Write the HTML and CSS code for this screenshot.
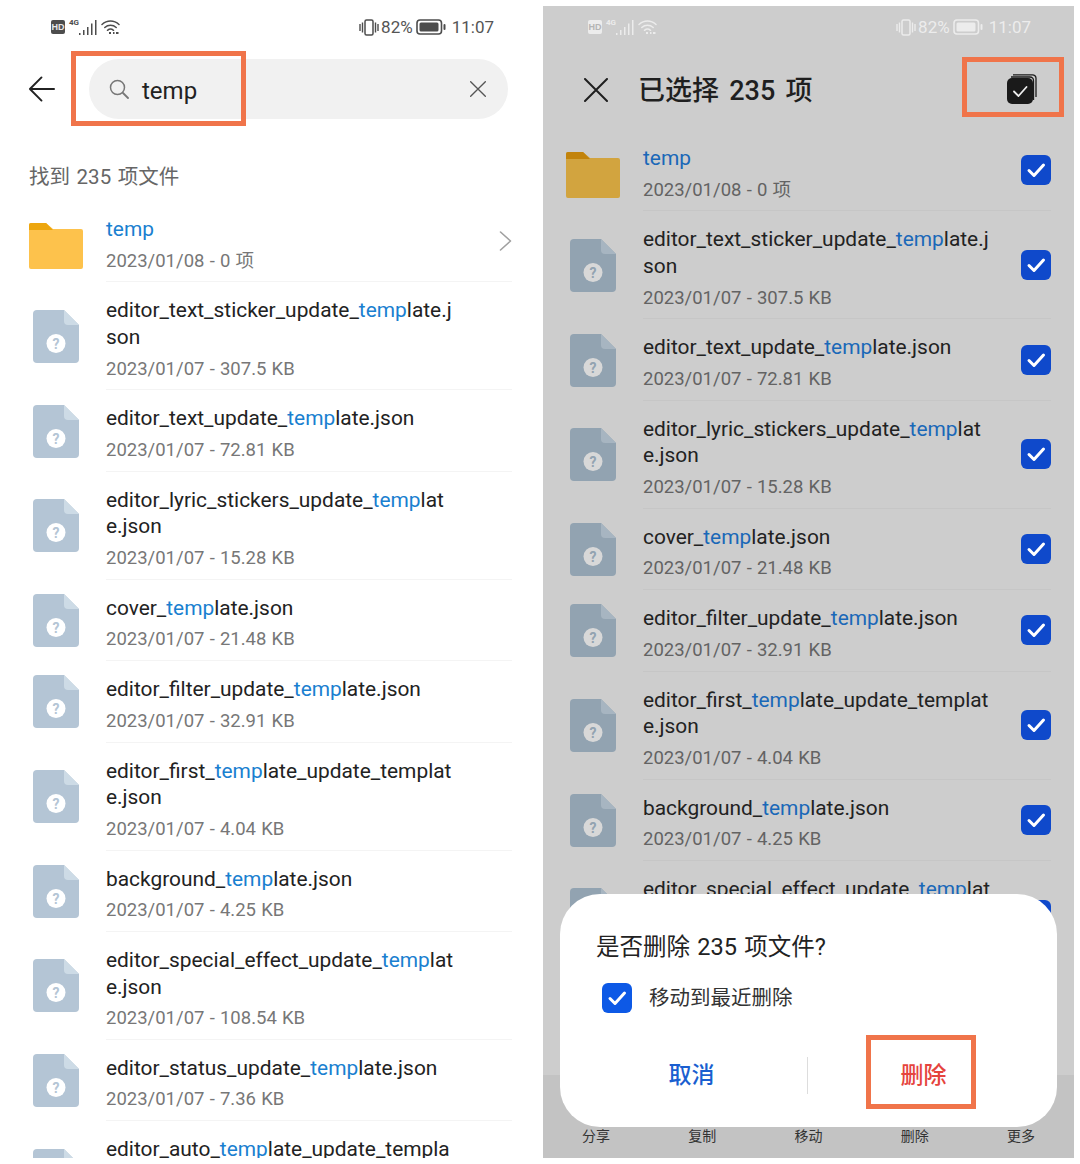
FILE: index.html
```html
<!DOCTYPE html>
<html lang="zh-CN">
<head>
<meta charset="utf-8">
<title>文件搜索</title>
<link rel="stylesheet" href="styles.css">
</head>
<body>
<svg class="defs" aria-hidden="true">
  <symbol id="file" viewBox="0 0 46 53">
    <path class="file-body" d="M4 0H31L46 15V49a4 4 0 0 1-4 4H4a4 4 0 0 1-4-4V4a4 4 0 0 1 4-4Z"/>
    <path class="file-fold" d="M31 0L46 15H35a4 4 0 0 1-4-4Z"/>
    <circle class="file-dot" cx="23" cy="33.500" r="9.500"/>
    <text class="file-q" x="23" y="38.500" text-anchor="middle">?</text>
  </symbol>
  <symbol id="folder" viewBox="0 0 54 46">
    <path class="folder-body" d="M2 0H17L24 6H52a2 2 0 0 1 2 2V44a2 2 0 0 1-2 2H2a2 2 0 0 1-2-2V2a2 2 0 0 1 2-2Z"/>
    <path class="folder-tab" d="M2 0H17L24 7H0V2a2 2 0 0 1 2-2Z"/>
  </symbol>
  <symbol id="tick" viewBox="0 0 30 30">
    <path d="M8 15.500L13 20.500L22.500 10" fill="none" stroke="#fff" stroke-width="3" stroke-linecap="round" stroke-linejoin="round"/>
  </symbol>
  <symbol id="close" viewBox="0 0 24 24">
    <path d="M1 1L23 23M23 1L1 23" fill="none" stroke="currentColor" stroke-width="2" stroke-linecap="round"/>
  </symbol>
  <symbol id="signal" viewBox="0 0 19 15">
    <path d="M1 13h1.500v2H1ZM5 10h1.500v5H5ZM9 7h1.500v8H9ZM13 3.500h1.500V15H13ZM17 0h1.500v15H17Z" fill="currentColor"/>
  </symbol>
  <symbol id="wifi" viewBox="0 0 19 16">
    <path d="M1 5.500C6 .8 13 .8 18 5.500M3.800 8.500C7 5.600 12 5.600 15.200 8.500M6.500 11.300C8.300 9.800 10.700 9.800 12.500 11.300" fill="none" stroke="currentColor" stroke-width="1.500" stroke-linecap="round"/>
    <path d="M8 13h2v2H8ZM12 13h1.500v2H12ZM15 13h2.500v2H15Z" fill="currentColor"/>
  </symbol>
  <symbol id="vibrate" viewBox="0 0 20 17">
    <rect x="6" y="1" width="8" height="15" rx="1.500" fill="none" stroke="currentColor" stroke-width="1.500"/>
    <path d="M1 5v7M3.500 3.500v10M16.500 3.500v10M19 5v7" fill="none" stroke="currentColor" stroke-width="1.400"/>
  </symbol>
  <symbol id="battery" viewBox="0 0 30 16">
    <rect x="1" y="1" width="24.500" height="14" rx="3" fill="none" stroke="currentColor" stroke-width="1.600"/>
    <rect x="3.500" y="3.500" width="19" height="9" rx="1.500" fill="currentColor"/>
    <rect x="27.500" y="5" width="2" height="6" rx="1" fill="currentColor"/>
  </symbol>
</svg>

<main class="phone phone-search">
  <div class="status">
    <div class="status-side">
      <span class="hd">HD</span>
      <span class="net"><span class="net-label">4G</span><svg class="ic-signal"><use href="#signal"/></svg></span>
      <svg class="ic-wifi"><use href="#wifi"/></svg>
    </div>
    <div class="status-side">
      <svg class="ic-vibrate"><use href="#vibrate"/></svg>
      <span class="status-text">82%</span>
      <svg class="ic-battery"><use href="#battery"/></svg>
      <span class="status-text clock">11:07</span>
    </div>
  </div>

  <div class="search-row">
    <svg class="back" viewBox="0 0 28 28"><path d="M27 14H2M14 2L2 14L14 26" fill="none" stroke="currentColor" stroke-width="2" stroke-linecap="round" stroke-linejoin="round"/></svg>
    <div class="search">
      <svg class="search-ic" viewBox="0 0 20 20"><circle cx="8.500" cy="8.500" r="7" fill="none" stroke="#777" stroke-width="1.500"/><path d="M14 14L19 19" stroke="#777" stroke-width="1.800" stroke-linecap="round"/></svg>
      <span class="search-text">temp</span>
      <svg class="search-clear"><use href="#close"/></svg>
    </div>
  </div>

  <div class="found">找到 235 项文件</div>

  <div class="list">
    <div class="row"><svg class="folder"><use href="#folder"/></svg><div class="body"><div class="text"><div class="name"><b>temp</b></div><div class="meta">2023/01/08 - 0 项</div></div><svg class="chev" viewBox="0 0 13 20"><path d="M1.500 1L11.500 10L1.500 19" fill="none" stroke="#a0a0a0" stroke-width="1.600" stroke-linecap="round" stroke-linejoin="round"/></svg></div></div>
    <div class="row"><svg class="file"><use href="#file"/></svg><div class="body"><div class="text"><div class="name">editor_text_sticker_update_<b>temp</b>late.j<br>son</div><div class="meta">2023/01/07 - 307.5 KB</div></div></div></div>
    <div class="row"><svg class="file"><use href="#file"/></svg><div class="body"><div class="text"><div class="name">editor_text_update_<b>temp</b>late.json</div><div class="meta">2023/01/07 - 72.81 KB</div></div></div></div>
    <div class="row"><svg class="file"><use href="#file"/></svg><div class="body"><div class="text"><div class="name">editor_lyric_stickers_update_<b>temp</b>lat<br>e.json</div><div class="meta">2023/01/07 - 15.28 KB</div></div></div></div>
    <div class="row"><svg class="file"><use href="#file"/></svg><div class="body"><div class="text"><div class="name">cover_<b>temp</b>late.json</div><div class="meta">2023/01/07 - 21.48 KB</div></div></div></div>
    <div class="row"><svg class="file"><use href="#file"/></svg><div class="body"><div class="text"><div class="name">editor_filter_update_<b>temp</b>late.json</div><div class="meta">2023/01/07 - 32.91 KB</div></div></div></div>
    <div class="row"><svg class="file"><use href="#file"/></svg><div class="body"><div class="text"><div class="name">editor_first_<b>temp</b>late_update_templat<br>e.json</div><div class="meta">2023/01/07 - 4.04 KB</div></div></div></div>
    <div class="row"><svg class="file"><use href="#file"/></svg><div class="body"><div class="text"><div class="name">background_<b>temp</b>late.json</div><div class="meta">2023/01/07 - 4.25 KB</div></div></div></div>
    <div class="row"><svg class="file"><use href="#file"/></svg><div class="body"><div class="text"><div class="name">editor_special_effect_update_<b>temp</b>lat<br>e.json</div><div class="meta">2023/01/07 - 108.54 KB</div></div></div></div>
    <div class="row"><svg class="file"><use href="#file"/></svg><div class="body"><div class="text"><div class="name">editor_status_update_<b>temp</b>late.json</div><div class="meta">2023/01/07 - 7.36 KB</div></div></div></div>
    <div class="row"><svg class="file"><use href="#file"/></svg><div class="body"><div class="text"><div class="name">editor_auto_<b>temp</b>late_update_templa<br>te.json</div><div class="meta">2023/01/07 - 5.12 KB</div></div></div></div>
  </div>
  <div class="mark mark-search"></div>
</main>

<section class="phone phone-select">
  <div class="status">
    <div class="status-side">
      <span class="hd">HD</span>
      <span class="net"><span class="net-label">4G</span><svg class="ic-signal"><use href="#signal"/></svg></span>
      <svg class="ic-wifi"><use href="#wifi"/></svg>
    </div>
    <div class="status-side">
      <svg class="ic-vibrate"><use href="#vibrate"/></svg>
      <span class="status-text">82%</span>
      <svg class="ic-battery"><use href="#battery"/></svg>
      <span class="status-text clock">11:07</span>
    </div>
  </div>

  <div class="select-head">
    <svg class="select-close"><use href="#close"/></svg>
    <h1 class="select-title">已选择 235 项</h1>
    <svg class="select-all" viewBox="0 0 30 30">
      <path d="M6 .8H25.500a3.500 3.500 0 0 1 3.500 3.500V23" fill="none" stroke="#1a1a1a" stroke-width="1.300"/>
      <path d="M4 3H23a3.500 3.500 0 0 1 3.500 3.500V26" fill="none" stroke="#1a1a1a" stroke-width="1.300"/>
      <rect x="0" y="4" width="26" height="26" rx="5" fill="#1a1a1a"/>
      <path d="M7 17.500L11.500 22L19.500 13" fill="none" stroke="#eee" stroke-width="1.800" stroke-linecap="round" stroke-linejoin="round"/>
    </svg>
  </div>

  <div class="list">
    <div class="row"><svg class="folder"><use href="#folder"/></svg><div class="body"><div class="text"><div class="name"><b>temp</b></div><div class="meta">2023/01/08 - 0 项</div></div><svg class="check"><use href="#tick"/></svg></div></div>
    <div class="row"><svg class="file"><use href="#file"/></svg><div class="body"><div class="text"><div class="name">editor_text_sticker_update_<b>temp</b>late.j<br>son</div><div class="meta">2023/01/07 - 307.5 KB</div></div><svg class="check"><use href="#tick"/></svg></div></div>
    <div class="row"><svg class="file"><use href="#file"/></svg><div class="body"><div class="text"><div class="name">editor_text_update_<b>temp</b>late.json</div><div class="meta">2023/01/07 - 72.81 KB</div></div><svg class="check"><use href="#tick"/></svg></div></div>
    <div class="row"><svg class="file"><use href="#file"/></svg><div class="body"><div class="text"><div class="name">editor_lyric_stickers_update_<b>temp</b>lat<br>e.json</div><div class="meta">2023/01/07 - 15.28 KB</div></div><svg class="check"><use href="#tick"/></svg></div></div>
    <div class="row"><svg class="file"><use href="#file"/></svg><div class="body"><div class="text"><div class="name">cover_<b>temp</b>late.json</div><div class="meta">2023/01/07 - 21.48 KB</div></div><svg class="check"><use href="#tick"/></svg></div></div>
    <div class="row"><svg class="file"><use href="#file"/></svg><div class="body"><div class="text"><div class="name">editor_filter_update_<b>temp</b>late.json</div><div class="meta">2023/01/07 - 32.91 KB</div></div><svg class="check"><use href="#tick"/></svg></div></div>
    <div class="row"><svg class="file"><use href="#file"/></svg><div class="body"><div class="text"><div class="name">editor_first_<b>temp</b>late_update_templat<br>e.json</div><div class="meta">2023/01/07 - 4.04 KB</div></div><svg class="check"><use href="#tick"/></svg></div></div>
    <div class="row"><svg class="file"><use href="#file"/></svg><div class="body"><div class="text"><div class="name">background_<b>temp</b>late.json</div><div class="meta">2023/01/07 - 4.25 KB</div></div><svg class="check"><use href="#tick"/></svg></div></div>
    <div class="row"><svg class="file"><use href="#file"/></svg><div class="body"><div class="text"><div class="name">editor_special_effect_update_<b>temp</b>lat<br>e.json</div><div class="meta">2023/01/07 - 108.54 KB</div></div><svg class="check"><use href="#tick"/></svg></div></div>
  </div>

  <div class="mark mark-all"></div>

  <nav class="toolbar">
    <span>分享</span><span>复制</span><span>移动</span><span>删除</span><span>更多</span>
  </nav>

  <div class="dialog">
    <div class="dialog-title">是否删除 235 项文件?</div>
    <div class="dialog-option">
      <svg class="check"><use href="#tick"/></svg>
      <span>移动到最近删除</span>
    </div>
    <div class="dialog-actions">
      <button class="action action-cancel">取消</button>
      <i class="action-sep"></i>
      <button class="action action-delete">删除</button>
    </div>
    <div class="mark mark-delete"></div>
  </div>
</section>
</body>
</html>
```
FILE: styles.css
```css
* { box-sizing: border-box; }

html, body {
  margin: 0;
  height: 1164px;
  overflow: hidden;
  background: #fff;
}

body {
  display: flex;
  align-items: flex-start;
  font-family: Roboto, "Noto Sans CJK SC", sans-serif;
  color: #222;
}

.defs { position: absolute; width: 0; height: 0; }

.phone {
  position: relative;
  height: 1158px;
  overflow: hidden;
  flex: none;
}

.phone-search {
  width: 543px;
  --file: #b4c5d5;
  --fold: #cddbe6;
  --dot: #fff;
  --folder: #fdc24c;
  --tab: #eda60f;
  --line: #f4f4f4;
  --hit: #1a7fd0;
  --meta: #777;
}

.phone-select {
  width: 531px;
  height: 1152px;
  margin-top: 6px;
  background: #cdcdcd;
  --file: #92a3b1;
  --fold: #a7b5c1;
  --dot: #d8d8d8;
  --folder: #d2a43f;
  --tab: #c2830c;
  --line: #c6c6c6;
  --hit: #1a68b8;
  --meta: #636363;
}

/* status bar */
.status {
  display: flex;
  justify-content: space-between;
  align-items: center;
  color: #4d4d4d;
}

.phone-search .status { height: 54px; padding: 0 49px 0 51px; }
.phone-select .status { height: 42px; padding: 0 43px 0 45px; color: #ececec; }

.status-side { display: flex; align-items: center; }

.hd {
  width: 14px;
  height: 14px;
  border-radius: 2px;
  background: #4d4d4d;
  color: #e8e8e8;
  font: 700 9px/14px "Liberation Sans", sans-serif;
  text-align: center;
}
.phone-select .hd { background: #ececec; color: #b5b5b5; }

.net { display: flex; align-items: flex-end; margin-left: 4px; position: relative; width: 28px; height: 16px; }
.net-label { font-size: 8px; line-height: 8px; font-weight: 700; position: absolute; left: 0; top: 0; }
.ic-signal { width: 19px; height: 15px; margin-left: 9px; }
.ic-wifi { width: 19px; height: 16px; margin-left: 4px; }
.ic-vibrate { width: 20px; height: 17px; margin-right: 2px; }
.ic-battery { width: 30px; height: 16px; margin: 0 6px 0 3px; }
.status-text { font-size: 17px; line-height: 20px; color: #555; }
.phone-select .status-text { color: #ececec; }

/* search header */
.search-row {
  display: flex;
  align-items: center;
  gap: 34px;
  margin-top: 5px;
  padding-left: 28px;
}

.back { width: 27px; height: 28px; color: #222; flex: none; }

.search {
  display: flex;
  align-items: center;
  width: 419px;
  height: 60px;
  padding: 0 22px 0 20px;
  border-radius: 30px;
  background: #f1f1f1;
}

.search-ic { width: 20px; height: 20px; flex: none; margin-top: -1px; }
.search-text { margin-left: 13px; padding-top: 3px; font-size: 24px; color: #222; flex: 1; }
.search-clear { width: 16px; height: 16px; color: #555; flex: none; }

.found {
  margin: 43px 0 9px 29px;
  font-size: 20.500px;
  word-spacing: 1.500px;
  line-height: 30px;
  color: #666;
}

/* list */
.row {
  display: flex;
  align-items: center;
  padding-left: 33px;
}

.phone-select .row { padding-left: 27px; }

.file { width: 46px; height: 53px; margin-right: 27px; flex: none; }

.folder {
  width: 54px;
  height: 46px;
  margin: 8px 23px 0 -4px;
  flex: none;
}

.file-body { fill: var(--file); }
.file-fold { fill: var(--fold); }
.file-dot { fill: var(--dot); }
.file-q { font: 700 14px Roboto, sans-serif; fill: var(--file); }
.folder-body { fill: var(--folder); }
.folder-tab { fill: var(--tab); }

.body {
  display: flex;
  align-items: center;
  flex: 1;
  min-width: 0;
  padding: 15px 0 7.800px;
  border-bottom: 1px solid var(--line);
  margin-right: 31px;
}

.phone-select .body { margin-right: 23px; }
.body .check, .body .chev { margin-top: -7px; }

.text { flex: 1; min-width: 0; }

.name {
  font-size: 20.900px;
  line-height: 26.600px;
  white-space: nowrap;
  color: #222;
}

.name b { font-weight: 400; color: var(--hit); }

.meta {
  margin-top: 5px;
  font-size: 18.500px;
  word-spacing: .6px;
  line-height: 26px;
  color: var(--meta);
  white-space: nowrap;
}

.chev { width: 13px; height: 20px; flex: none; margin-right: 0; }

.check {
  width: 30px;
  height: 30px;
  border-radius: 6px;
  background: #0f49cb;
  flex: none;
}

/* select header */
.select-head {
  display: flex;
  align-items: center;
  height: 82px;
  padding: 2px 37px 0 41px;
}

.select-close { width: 24px; height: 24px; color: #1f1f1f; flex: none; }

.select-title {
  margin: 2px 0 0 30px;
  flex: 1;
  font-size: 27px;
  word-spacing: 3.500px;
  line-height: 34px;
  font-weight: 500;
  color: #1f1f1f;
}

.select-all { width: 30px; height: 30px; flex: none; margin-top: -2px; }

/* toolbar */
.toolbar {
  position: absolute;
  left: 0;
  right: 0;
  bottom: 0;
  height: 83px;
  display: grid;
  grid-template-columns: repeat(5, 1fr);
  align-items: end;
  padding-bottom: 12px;
  background: #c3c3c3;
  font-size: 14px;
  line-height: 20px;
  text-align: center;
  color: #333;
}

/* dialog */
.dialog {
  position: absolute;
  left: 17px;
  top: 888px;
  width: 497px;
  height: 233px;
  padding: 36px 36px 0;
  border-radius: 40px;
  background: #fff;
}

.dialog-title {
  font-size: 23.500px;
  word-spacing: 1.500px;
  line-height: 34px;
  color: #222;
}

.dialog-option {
  display: flex;
  align-items: center;
  gap: 17px;
  margin-top: 19px;
  padding-left: 6px;
  font-size: 20.500px;
  line-height: 30px;
  color: #333;
}

.dialog-option .check { background: #0d59e6; }

.dialog-actions {
  display: flex;
  align-items: center;
  margin: 44px -20px 0;
}

.action {
  flex: 1;
  padding: 0;
  border: 0;
  background: none;
  font: 500 23px/36px Roboto, "Noto Sans CJK SC", sans-serif;
}

.action-cancel { color: #1a5fd0; }
.action-delete { color: #e5443d; padding-right: 2px; }
.action-sep { width: 1px; height: 37px; background: #ddd; flex: none; }

/* annotation frames */
.mark {
  position: absolute;
  border: 5px solid #f0744a;
  pointer-events: none;
}

.mark-search { left: 71px; top: 51px; width: 175px; height: 75px; }
.mark-all { left: 419px; top: 51px; width: 102px; height: 60px; }
.mark-delete { left: 306px; top: 141px; width: 110px; height: 74px; }
```
